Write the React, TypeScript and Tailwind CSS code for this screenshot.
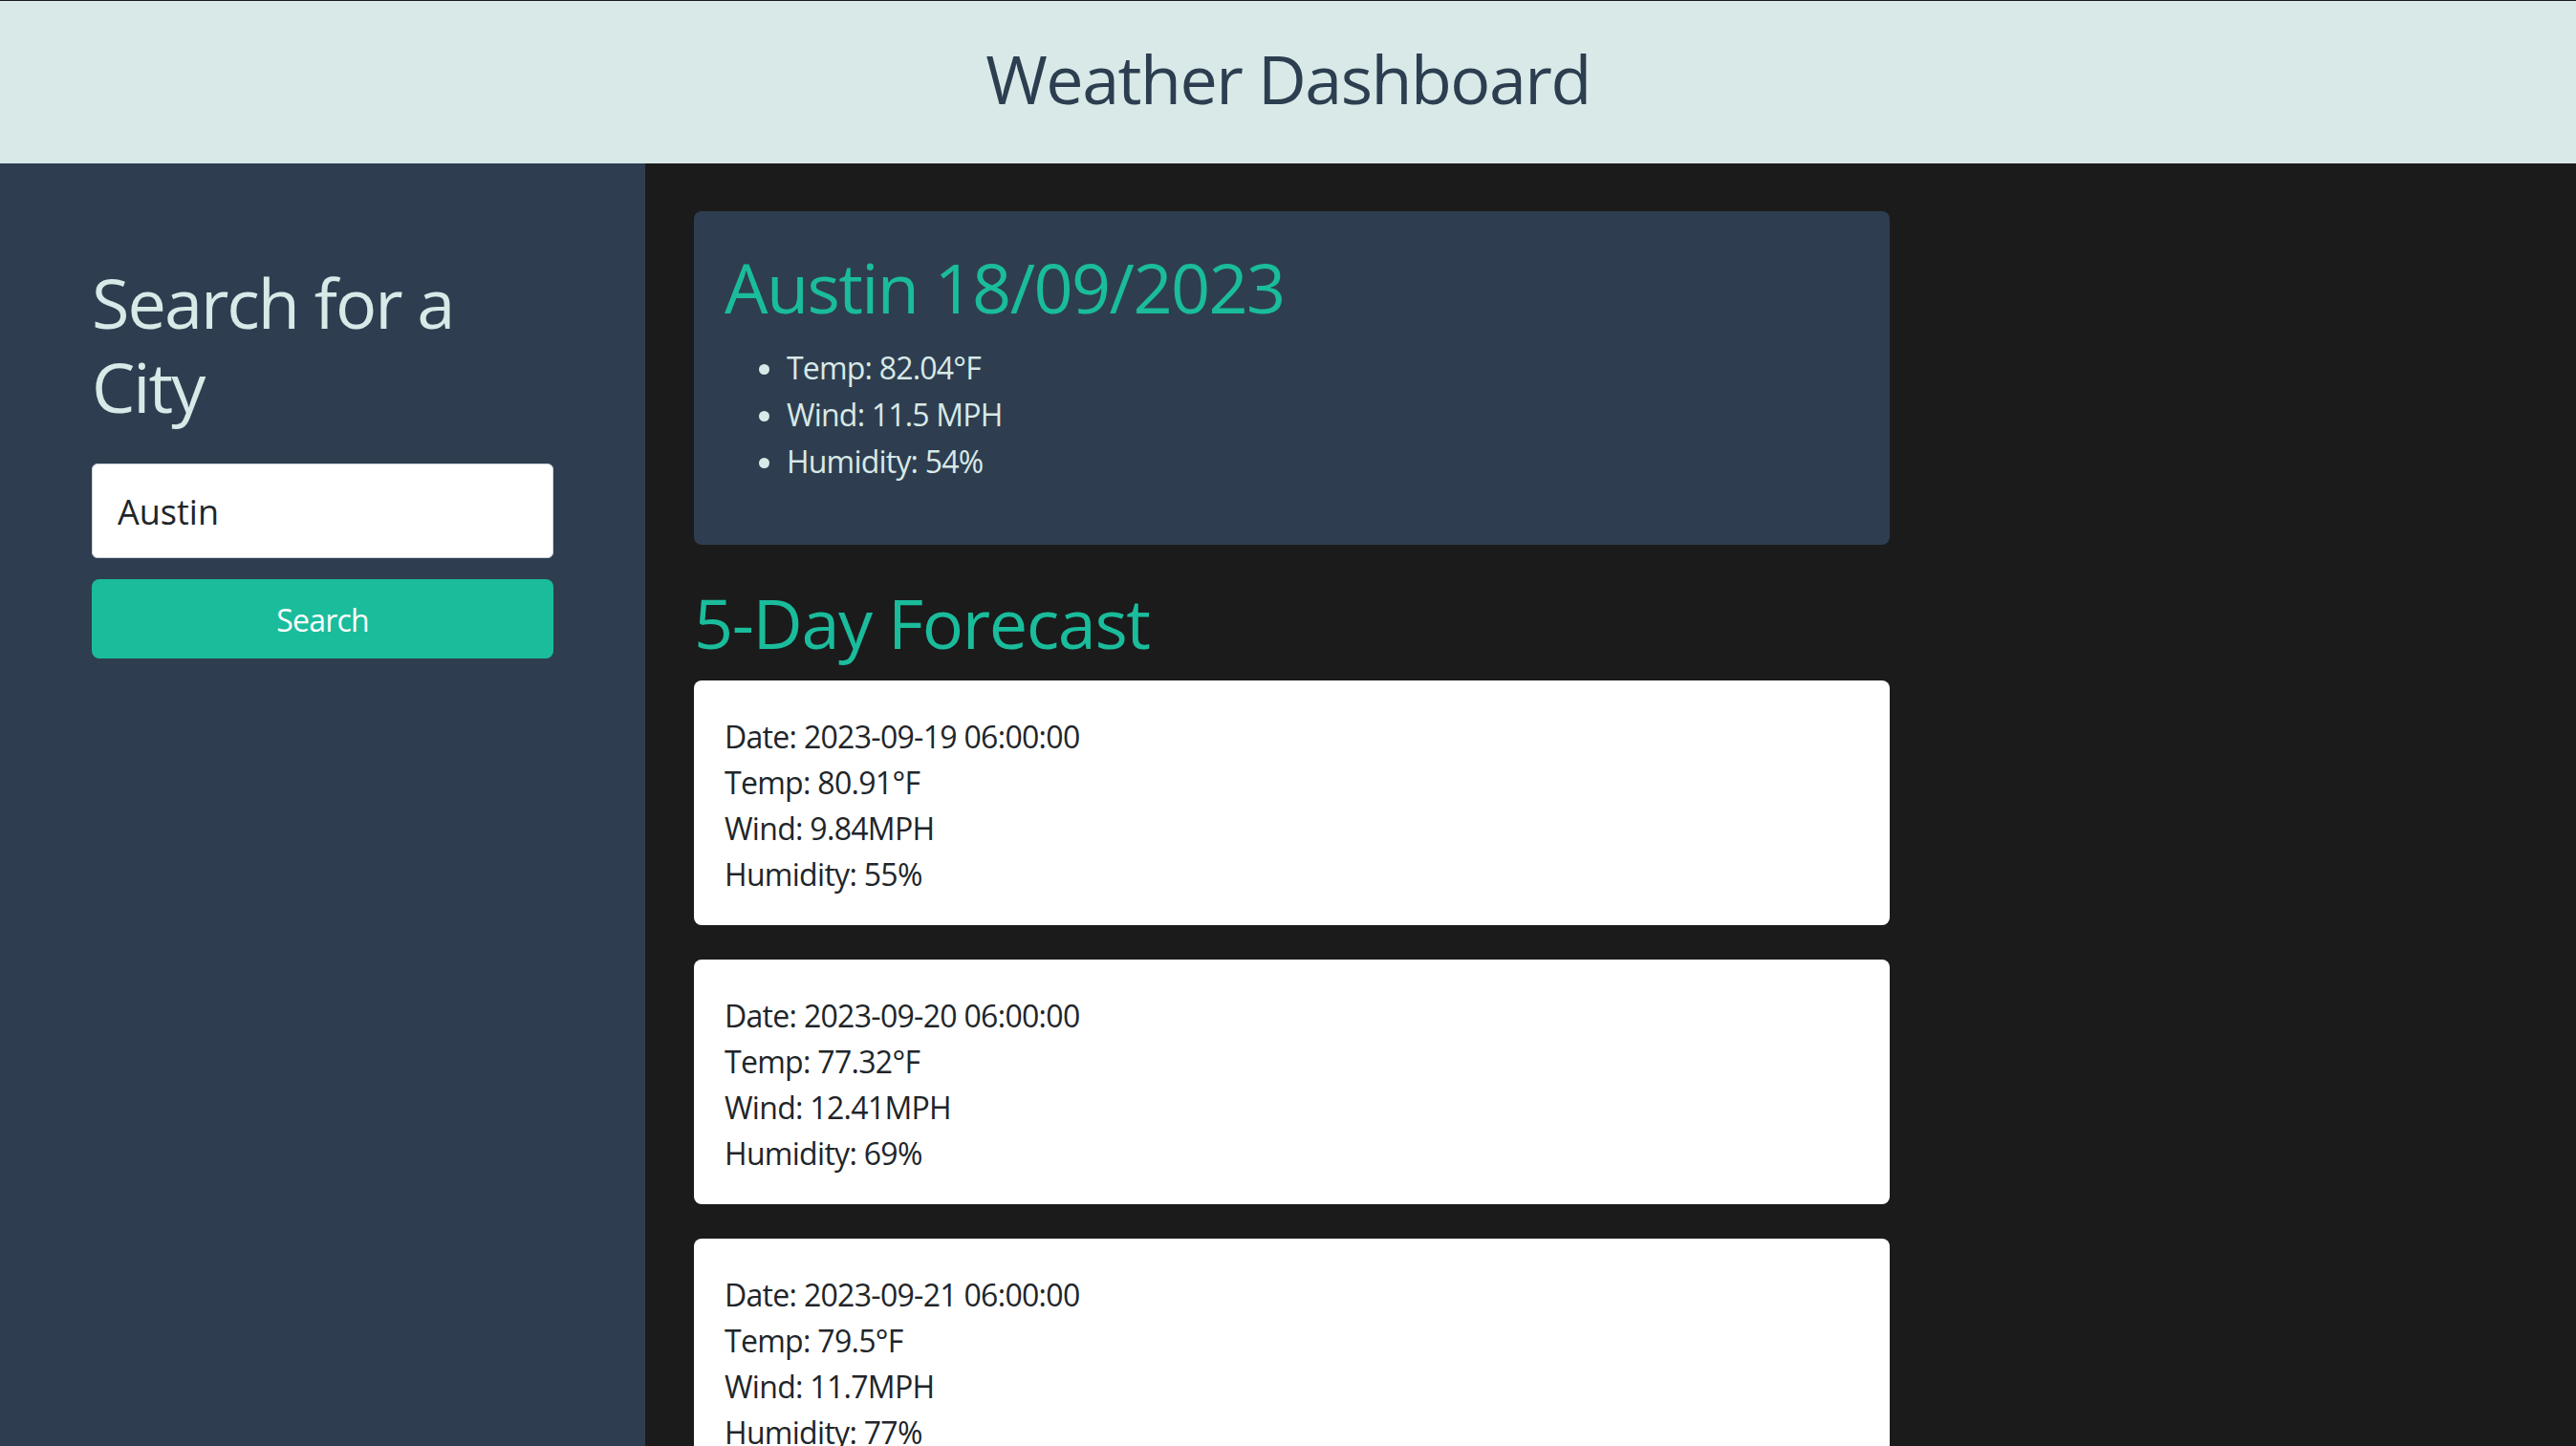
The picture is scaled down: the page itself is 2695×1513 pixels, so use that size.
import React from "react";

const current = {
  city: "Austin",
  date: "18/09/2023",
  temp: "82.04°F",
  wind: "11.5 MPH",
  humidity: "54%",
};

const forecast = [
  { date: "2023-09-19 06:00:00", temp: "80.91°F", wind: "9.84MPH", humidity: "55%" },
  { date: "2023-09-20 06:00:00", temp: "77.32°F", wind: "12.41MPH", humidity: "69%" },
  { date: "2023-09-21 06:00:00", temp: "79.5°F", wind: "11.7MPH", humidity: "77%" },
];

function App() {
  return (
    <div className="min-h-screen bg-[#1b1b1b] font-['Open_Sans',sans-serif]">
      <header className="h-[171px] bg-[#d8e9e7] border-t border-[#1b1b1b] flex items-center justify-center pb-[9px]">
        <h1 className="text-[70px] leading-[86px] tracking-[-1.5px] text-[#2c3e50]">Weather Dashboard</h1>
      </header>

      <div className="flex">
        {/* Sidebar */}
        <aside className="w-[675px] shrink-0 bg-[#2e3e50] min-h-[1342px] pl-[96px] pt-[101px]">
          <h2 className="text-[72px] leading-[88px] tracking-[-2px] text-[#d8e9e7] w-[483px]">Search for a City</h2>
          <input
            className="mt-[37px] block w-[483px] h-[99px] bg-white border border-[#ced4da] rounded-md pl-[26px] pt-[2px] text-[36px] text-[#212529] outline-none"
            defaultValue="Austin"
          />
          <button className="mt-[22px] block w-[483px] h-[83px] bg-[#1abc9c] rounded-lg text-white text-[32px] tracking-[-0.8px] pt-[2px]">
            Search
          </button>
        </aside>

        {/* Main */}
        <main className="pl-[51px] pt-[50px]">
          <section className="w-[1251px] h-[349px] bg-[#2e3e50] rounded-lg px-[32px] pt-[36px]">
            <h2 className="text-[72px] leading-[86px] tracking-[-1.6px] text-[#1abc9c]">
              {current.city} {current.date}
            </h2>
            <ul className="mt-[17px] list-disc pl-[65px] text-[32px] leading-[49px] tracking-[-0.8px] text-[#d8e9e7]">
              <li>Temp: {current.temp}</li>
              <li>Wind: {current.wind}</li>
              <li>Humidity: {current.humidity}</li>
            </ul>
          </section>

          <h2 className="mt-[38px] text-[72px] leading-[86px] tracking-[-1.4px] text-[#1abc9c]">5-Day Forecast</h2>

          <div className="mt-[18px] flex flex-col gap-[36px] pb-[36px]">
            {forecast.map((day) => (
              <div
                key={day.date}
                className="w-[1251px] bg-white rounded-lg px-[32px] pt-[35px] pb-[29px] text-[32px] leading-[48px] tracking-[-0.7px] text-[#212529]"
              >
                <p>Date: {day.date}</p>
                <p>Temp: {day.temp}</p>
                <p>Wind: {day.wind}</p>
                <p>Humidity: {day.humidity}</p>
              </div>
            ))}
          </div>
        </main>
      </div>
    </div>
  );
}

export default App;
